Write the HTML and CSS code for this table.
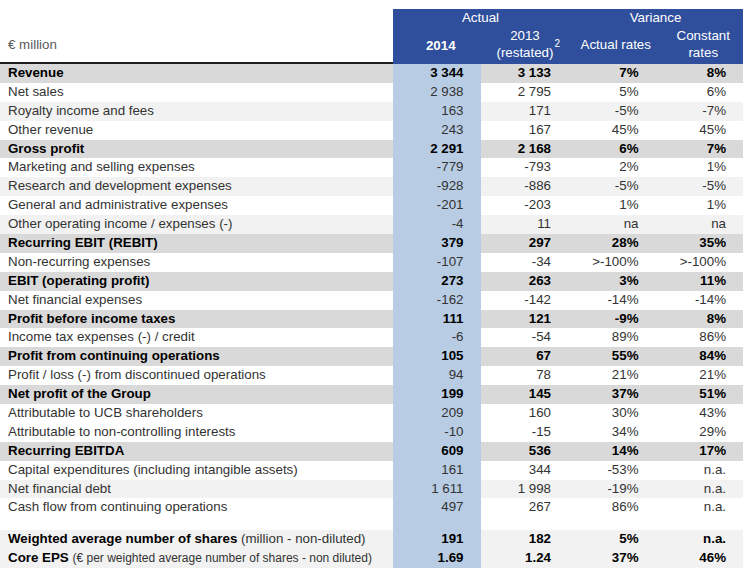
FILE: index.html
```html
<!DOCTYPE html>
<html lang="en">
<head>
<meta charset="utf-8">
<title>Key figures</title>
<link rel="stylesheet" href="styles.css">
</head>
<body>
<div class="report">
  <div class="head">
    <div class="h-label">€ million</div>
    <div class="h-group g-actual">Actual</div>
    <div class="h-group g-var">Variance</div>
    <div class="h-col h-bold">2014</div>
    <div class="h-col">2013<br>(restated)<sup>2</sup></div>
    <div class="h-col">Actual rates</div>
    <div class="h-col">Constant<br>rates</div>
  </div>
  <div class="body">
    <div class="row total"><span class="lab">Revenue</span><span class="num cur">3 344</span><span class="num">3 133</span><span class="num">7%</span><span class="num">8%</span></div>
    <div class="row"><span class="lab">Net sales</span><span class="num cur">2 938</span><span class="num">2 795</span><span class="num">5%</span><span class="num">6%</span></div>
    <div class="row alt"><span class="lab">Royalty income and fees</span><span class="num cur">163</span><span class="num">171</span><span class="num">-5%</span><span class="num">-7%</span></div>
    <div class="row"><span class="lab">Other revenue</span><span class="num cur">243</span><span class="num">167</span><span class="num">45%</span><span class="num">45%</span></div>
    <div class="row total"><span class="lab">Gross profit</span><span class="num cur">2 291</span><span class="num">2 168</span><span class="num">6%</span><span class="num">7%</span></div>
    <div class="row"><span class="lab">Marketing and selling expenses</span><span class="num cur">-779</span><span class="num">-793</span><span class="num">2%</span><span class="num">1%</span></div>
    <div class="row alt"><span class="lab">Research and development expenses</span><span class="num cur">-928</span><span class="num">-886</span><span class="num">-5%</span><span class="num">-5%</span></div>
    <div class="row"><span class="lab">General and administrative expenses</span><span class="num cur">-201</span><span class="num">-203</span><span class="num">1%</span><span class="num">1%</span></div>
    <div class="row alt"><span class="lab">Other operating income / expenses (-)</span><span class="num cur">-4</span><span class="num">11</span><span class="num">na</span><span class="num">na</span></div>
    <div class="row total"><span class="lab">Recurring EBIT (REBIT)</span><span class="num cur">379</span><span class="num">297</span><span class="num">28%</span><span class="num">35%</span></div>
    <div class="row"><span class="lab">Non-recurring expenses</span><span class="num cur">-107</span><span class="num">-34</span><span class="num">&gt;-100%</span><span class="num">&gt;-100%</span></div>
    <div class="row total"><span class="lab">EBIT (operating profit)</span><span class="num cur">273</span><span class="num">263</span><span class="num">3%</span><span class="num">11%</span></div>
    <div class="row"><span class="lab">Net financial expenses</span><span class="num cur">-162</span><span class="num">-142</span><span class="num">-14%</span><span class="num">-14%</span></div>
    <div class="row total"><span class="lab">Profit before income taxes</span><span class="num cur">111</span><span class="num">121</span><span class="num">-9%</span><span class="num">8%</span></div>
    <div class="row"><span class="lab">Income tax expenses (-) / credit</span><span class="num cur">-6</span><span class="num">-54</span><span class="num">89%</span><span class="num">86%</span></div>
    <div class="row total"><span class="lab">Profit from continuing operations</span><span class="num cur">105</span><span class="num">67</span><span class="num">55%</span><span class="num">84%</span></div>
    <div class="row"><span class="lab">Profit / loss (-) from discontinued operations</span><span class="num cur">94</span><span class="num">78</span><span class="num">21%</span><span class="num">21%</span></div>
    <div class="row total"><span class="lab">Net profit of the Group</span><span class="num cur">199</span><span class="num">145</span><span class="num">37%</span><span class="num">51%</span></div>
    <div class="row"><span class="lab">Attributable to UCB shareholders</span><span class="num cur">209</span><span class="num">160</span><span class="num">30%</span><span class="num">43%</span></div>
    <div class="row"><span class="lab">Attributable to non-controlling interests</span><span class="num cur">-10</span><span class="num">-15</span><span class="num">34%</span><span class="num">29%</span></div>
    <div class="row total"><span class="lab">Recurring EBITDA</span><span class="num cur">609</span><span class="num">536</span><span class="num">14%</span><span class="num">17%</span></div>
    <div class="row"><span class="lab">Capital expenditures (including intangible assets)</span><span class="num cur">161</span><span class="num">344</span><span class="num">-53%</span><span class="num">n.a.</span></div>
    <div class="row alt"><span class="lab">Net financial debt</span><span class="num cur">1 611</span><span class="num">1 998</span><span class="num">-19%</span><span class="num">n.a.</span></div>
    <div class="row"><span class="lab">Cash flow from continuing operations</span><span class="num cur">497</span><span class="num">267</span><span class="num">86%</span><span class="num">n.a.</span></div>
    <div class="row spacer"><span class="lab"></span><span class="num cur"></span><span class="num"></span><span class="num"></span><span class="num"></span></div>
    <div class="row alt strong"><span class="lab"><b>Weighted average number of shares</b> (million - non-diluted)</span><span class="num cur">191</span><span class="num">182</span><span class="num">5%</span><span class="num">n.a.</span></div>
    <div class="row alt strong"><span class="lab"><b>Core EPS</b> <small>(€ per weighted average number of shares - non diluted)</small></span><span class="num cur">1.69</span><span class="num">1.24</span><span class="num">37%</span><span class="num">46%</span></div>
  </div>
</div>
</body>
</html>
```
FILE: styles.css
```css
html, body {
  margin: 0;
  padding: 0;
  background: #ffffff;
}

body {
  font-family: "Liberation Sans", Arial, sans-serif;
  font-size: 13.33px;
  color: #333333;
}

.report {
  width: 743px;
  padding-top: 9px;
}

.head {
  display: grid;
  grid-template-columns: 393px repeat(4, 87.5px);
  grid-template-rows: 18px 37px;
}

.h-label {
  grid-row: 1 / 3;
  grid-column: 1;
  display: flex;
  align-items: center;
  padding: 18px 0 0 8px;
  border-bottom: 2px solid #1e1e1e;
  color: #595959;
}

.h-group,
.h-col {
  background: #2f4f9c;
  color: #ffffff;
  text-align: center;
}

.h-group {
  line-height: 18px;
}

.g-actual {
  grid-column: 2 / 4;
}

.g-var {
  grid-column: 4 / 6;
}

.h-col {
  display: flex;
  align-items: center;
  justify-content: center;
  padding-left: 8px;
  padding-bottom: 3px;
  line-height: 17px;
}

.h-bold {
  font-weight: bold;
  padding-bottom: 0;
}

.h-col sup {
  font-size: 10px;
  line-height: 0;
  vertical-align: 4px;
  margin-left: 1px;
}

.row {
  display: grid;
  grid-template-columns: 393px repeat(4, 87.5px);
  height: 18.9px;
  line-height: 18.9px;
  white-space: nowrap;
}

.row > span {
  display: block;
  overflow: hidden;
}

.lab {
  padding-left: 8px;
}

.num {
  text-align: right;
  padding-right: 17px;
}

.cur {
  background: #b8cce4;
}

.alt {
  background: #f2f2f2;
}

.total {
  background: #d9d9d9;
  font-weight: bold;
  color: #000000;
}

.strong .num {
  font-weight: bold;
  color: #000000;
}

.strong .lab b {
  color: #000000;
}

.strong .lab small {
  font-size: 12px;
}

.spacer {
  height: 13px;
}
```
